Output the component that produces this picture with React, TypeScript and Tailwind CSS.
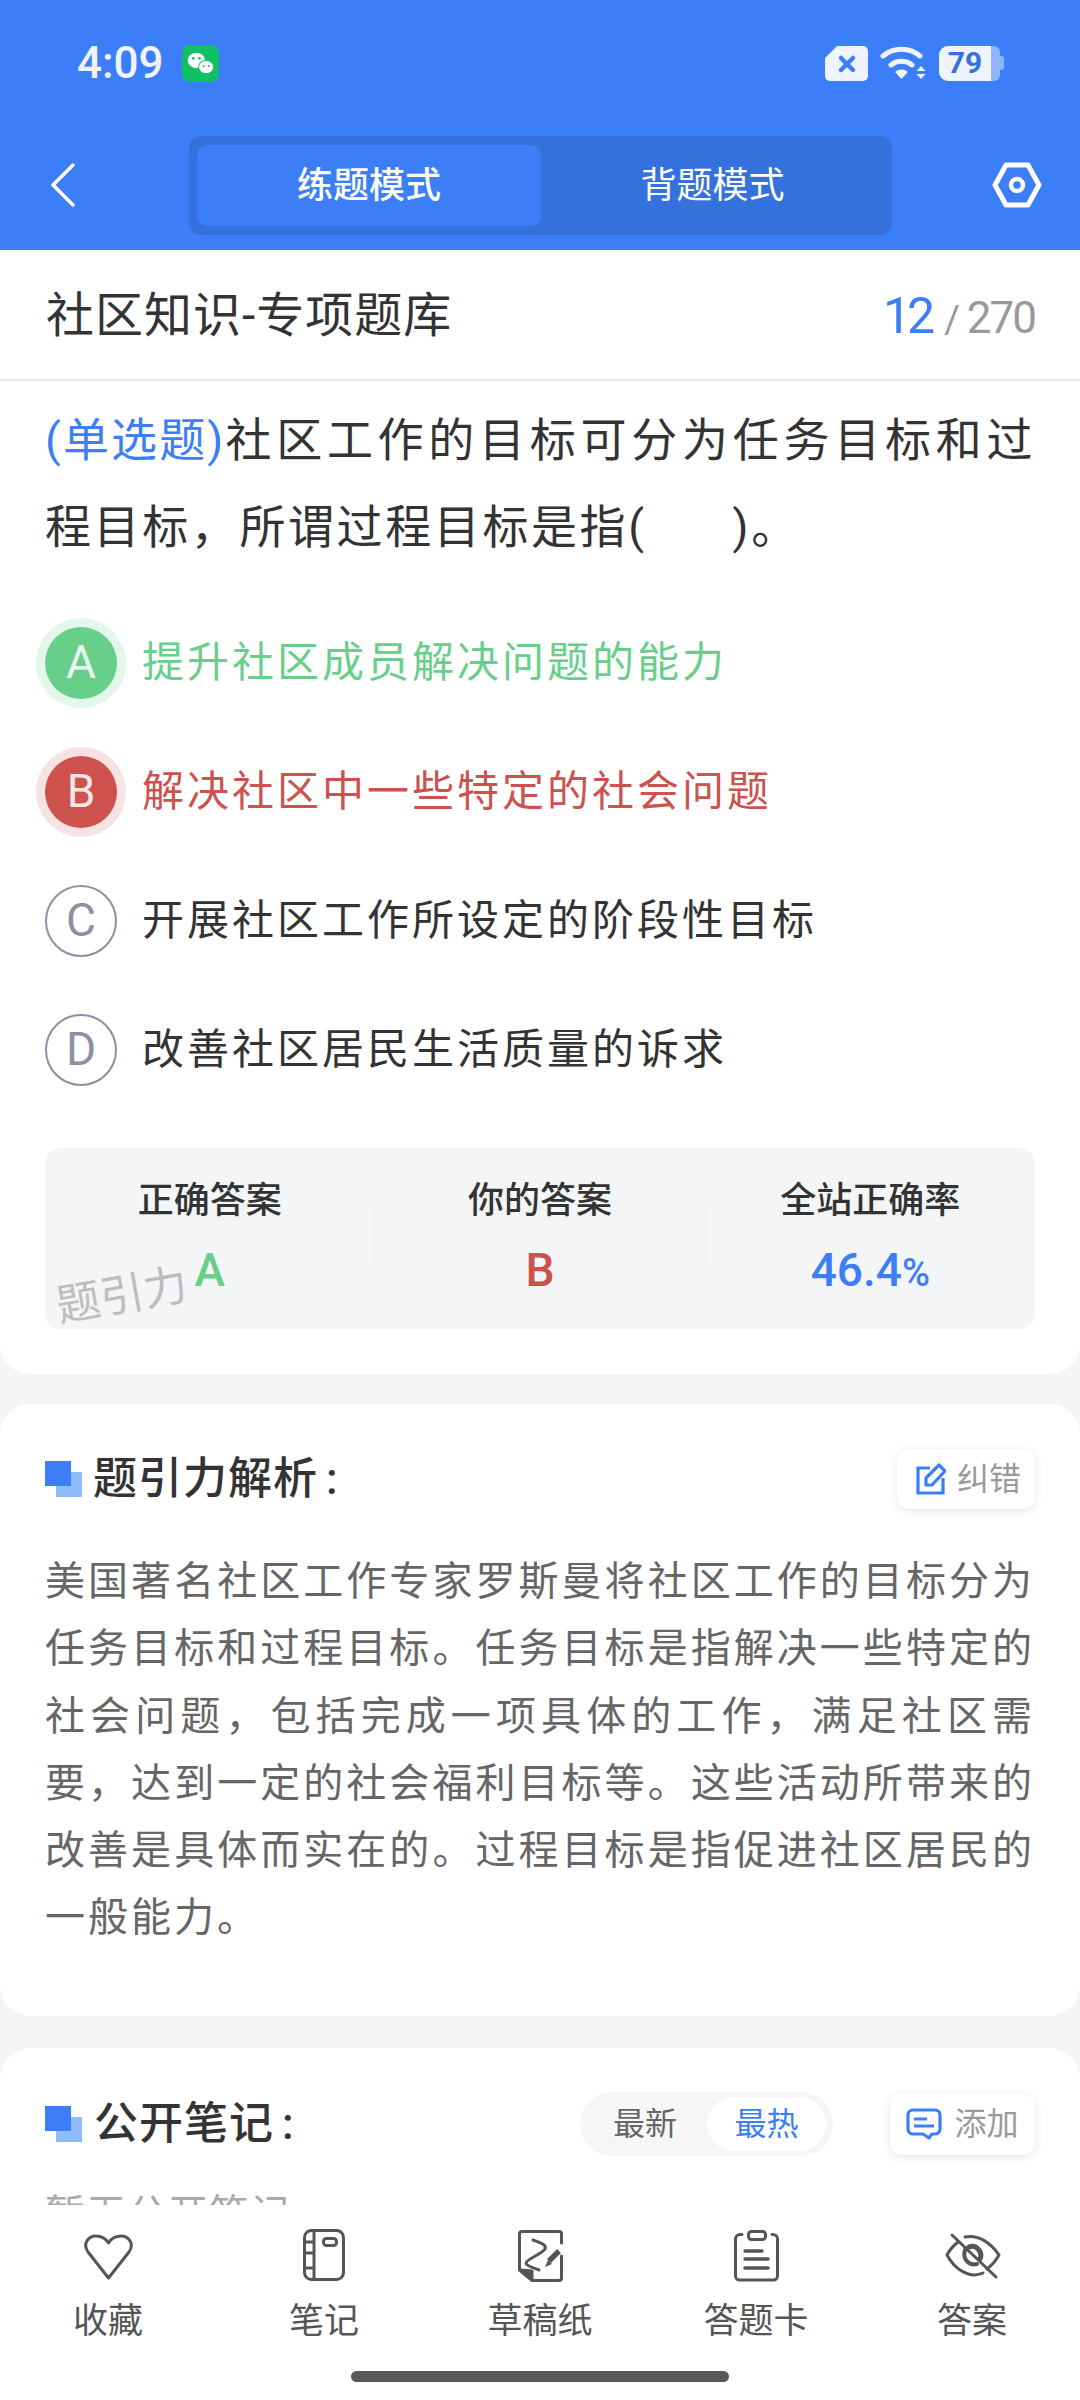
const FONT = "font-['Roboto','Noto_Sans_CJK_SC',sans-serif]";

const options = [
  { key: 'A', text: '提升社区成员解决问题的能力', state: 'right' },
  { key: 'B', text: '解决社区中一些特定的社会问题', state: 'wrong' },
  { key: 'C', text: '开展社区工作所设定的阶段性目标', state: 'idle' },
  { key: 'D', text: '改善社区居民生活质量的诉求', state: 'idle' },
];

function StatusBar() {
  return (
    <div className="flex h-[124px] items-center justify-between pl-[77px] pr-[76px] pt-[2px]">
      <div className="flex items-center gap-[18px]">
        <span className="text-[44px] font-medium leading-none text-[#eef3fe]">4:09</span>
        <svg width="37" height="37" viewBox="0 0 36 36">
          <rect width="36" height="36" rx="8" fill="#0fc161" />
          <ellipse cx="14" cy="15" rx="8.5" ry="7.5" fill="#fff" />
          <ellipse cx="23.5" cy="21.5" rx="7.5" ry="6.5" fill="#fff" stroke="#0fc161" />
          <circle cx="11" cy="13" r="1.3" fill="#0fc161" />
          <circle cx="17" cy="13" r="1.3" fill="#0fc161" />
          <circle cx="21" cy="20.5" r="1" fill="#0fc161" />
          <circle cx="26" cy="20.5" r="1" fill="#0fc161" />
        </svg>
      </div>
      <div className="flex items-center gap-[12px]">
        <svg width="43" height="35" viewBox="0 0 43 35">
          <path d="M12 0H38a5 5 0 0 1 5 5V30a5 5 0 0 1-5 5H5a5 5 0 0 1-5-5V12Z" fill="#eef3fe" />
          <path d="M16 12l12 12M28 12L16 24" stroke="#3b7ef8" strokeWidth="4.5" strokeLinecap="round" />
        </svg>
        <svg width="47" height="35" viewBox="0 0 47 35">
          <path d="M3 10a29 29 0 0 1 37 0M11 19a17 17 0 0 1 21 0" fill="none" stroke="#eef3fe" strokeWidth="5" strokeLinecap="round" />
          <path d="M15 26a10 10 0 0 1 13 0l-6.500 7Z" fill="#eef3fe" />
          <path d="M41 20l4.500 5h-9ZM36.500 28h9l-4.500 5Z" fill="#eef3fe" />
        </svg>
        <div className="flex items-center">
          <div className="flex h-[35px] w-[52px] items-center justify-center rounded-l-[9px] bg-[#eef3fe] text-[30px] font-bold leading-none text-[#3571dc]">
            79
          </div>
          <div className="h-[35px] w-[9px] rounded-r-[6px] bg-[#8fb4fa]" />
          <div className="h-[14px] w-[4px] rounded-r-[3px] bg-[#8fb4fa]" />
        </div>
      </div>
    </div>
  );
}

function NavBar() {
  return (
    <div className="flex h-[126px] items-start pl-[51px] pr-[38px] pt-[12px]">
      <svg className="mt-[27px]" width="24" height="44" viewBox="0 0 24 44">
        <path d="M22 2L2 22l20 20" fill="none" stroke="#fff" strokeWidth="3.500" strokeLinecap="round" strokeLinejoin="round" />
      </svg>
      <div className="ml-[114px] flex h-[99px] w-[703px] rounded-[12px] bg-[#3571dc] p-[8px] pt-[9px]">
        <div className="flex h-[81px] w-[344px] items-center justify-center rounded-[10px] bg-[#3b7ef8] text-[36px] font-medium text-white">
          练题模式
        </div>
        <div className="flex flex-1 items-center justify-center text-[36px] text-white">背题模式</div>
      </div>
      <svg className="ml-auto mt-[26px]" width="50" height="46" viewBox="0 0 50 46">
        <path d="M14 3H36L47 23 36 43H14L3 23Z" fill="none" stroke="#fff" strokeWidth="5" strokeLinejoin="round" />
        <circle cx="25" cy="23" r="6" fill="none" stroke="#fff" strokeWidth="4.500" />
      </svg>
    </div>
  );
}

function OptionRow({ item }: { item: (typeof options)[number] }) {
  return (
    <div className="flex h-[129px] items-center">
      {item.state === 'right' && (
        <div className="flex h-[72px] w-[72px] items-center justify-center rounded-full bg-[#68cf8b] text-[46px] text-[#e8f8ee] shadow-[0_0_0_9px_#e3f7ea]">
          A
        </div>
      )}
      {item.state === 'wrong' && (
        <div className="flex h-[72px] w-[72px] items-center justify-center rounded-full bg-[#cd514d] text-[46px] text-[#f8e6e6] shadow-[0_0_0_9px_#f6e3e3]">
          B
        </div>
      )}
      {item.state === 'idle' && (
        <div className="flex h-[72px] w-[72px] items-center justify-center rounded-full border-2 border-[#8d90a3] text-[46px] text-[#8d90a3]">
          {item.key}
        </div>
      )}
      <span
        className={`ml-[25px] text-[42px] leading-none tracking-[3px] ${
          item.state === 'right' ? 'text-[#68cf8b]' : item.state === 'wrong' ? 'text-[#cd514d]' : 'text-[#333]'
        }`}
      >
        {item.text}
      </span>
    </div>
  );
}

function SectionIcon() {
  return (
    <div className="relative h-[36px] w-[37px] shrink-0">
      <div className="absolute bottom-0 right-0 h-[25px] w-[26px] bg-[#90bbfb]" />
      <div className="absolute left-0 top-0 h-[25px] w-[26px] bg-[#3b7ef8]" />
    </div>
  );
}

function Stat({ label, children }: { label: string; children: React.ReactNode }) {
  return (
    <div className="flex w-[330px] flex-col items-center">
      <div className="text-[36px] font-medium leading-[50px] text-[#333]">{label}</div>
      <div className="mt-[19px] text-[46px] font-medium leading-[50px]">{children}</div>
    </div>
  );
}

function ExplainCard() {
  return (
    <div className="mt-[30px] h-[612px] rounded-[30px] bg-white px-[45px] pt-[45px]">
      <div className="flex items-center justify-between">
        <div className="flex items-center">
          <SectionIcon />
          <span className="ml-[11px] text-[44px] font-medium leading-none tracking-[1px] text-[#333]">
            题引力解析<span className="ml-[8px]">:</span>
          </span>
        </div>
        <div className="flex h-[60px] w-[138px] items-center justify-center gap-[11px] rounded-[12px] bg-white pl-[5px] shadow-[0_2px_10px_rgba(0,0,0,0.1)]">
          <svg width="30" height="32" viewBox="0 0 30 32">
            <path d="M14 5H2V30H27V15" fill="none" stroke="#3b7ef8" strokeWidth="3.200" />
            <path d="M10 22V15L23 2l6 6-13 14Z" fill="none" stroke="#3b7ef8" strokeWidth="3.200" strokeLinejoin="round" />
          </svg>
          <span className="text-[32px] text-[#999]">纠错</span>
        </div>
      </div>
      <p className="mt-[39px] text-justify text-[40px] leading-[67.3px] tracking-[3px] text-[#666]">
        美国著名社区工作专家罗斯曼将社区工作的目标分为任务目标和过程目标。任务目标是指解决一些特定的社会问题，包括完成一项具体的工作，满足社区需要，达到一定的社会福利目标等。这些活动所带来的改善是具体而实在的。过程目标是指促进社区居民的一般能力。
      </p>
    </div>
  );
}

function NotesCard() {
  return (
    <div className="mt-[32px] rounded-t-[30px] bg-white px-[45px] pt-[44px]">
      <div className="flex items-center">
        <SectionIcon />
        <span className="ml-[12px] text-[44px] font-medium leading-none tracking-[1px] text-[#333]">
          公开笔记<span className="ml-[8px]">:</span>
        </span>
        <div className="ml-auto flex h-[64px] w-[253px] items-center rounded-full bg-[#f6f6f6] pl-[33px] pr-[7px]">
          <span className="text-[32px] text-[#666]">最新</span>
          <div className="ml-auto flex h-[54px] w-[119px] items-center justify-center rounded-full bg-white text-[32px] text-[#3b7ef8]">
            最热
          </div>
        </div>
        <div className="ml-[57px] flex h-[61px] w-[145px] items-center justify-center gap-[12px] rounded-[12px] bg-white shadow-[0_2px_10px_rgba(0,0,0,0.1)]">
          <svg width="36" height="32" viewBox="0 0 36 32">
            <path d="M7 2H29a5 5 0 0 1 5 5V21a5 5 0 0 1-5 5H26l-3 4-6-4H7a5 5 0 0 1-5-5V7a5 5 0 0 1 5-5Z" fill="none" stroke="#3b7ef8" strokeWidth="3.200" strokeLinejoin="round" />
            <path d="M8 11H21M8 18H28" stroke="#3b7ef8" strokeWidth="3.200" />
          </svg>
          <span className="text-[32px] text-[#999]">添加</span>
        </div>
      </div>
      <div className="mt-[29px] text-[40px] leading-[60px] tracking-[1px] text-[#aaa]">暂无公开笔记</div>
    </div>
  );
}

const tabs = [
  {
    label: '收藏',
    icon: <path d="M27.500 49L7 23C1 14 8 7 15 7c6 0 10 3 12.500 7C30 10 34 7 40 7c7 0 14 7 8 16Z" />,
  },
  {
    label: '笔记',
    icon: (
      <>
        <rect x="7.500" y="1.500" width="39" height="49" rx="7" />
        <path d="M17 2V50M7.500 13H17M7.500 24H17M7.500 39H17" />
        <rect x="26.500" y="9.500" width="13" height="7" rx="3" />
      </>
    ),
  },
  {
    label: '草稿纸',
    icon: (
      <>
        <path d="M19 51.500H46a2.500 2.500 0 0 0 2.500-2.500V27M48.500 14V5A2.500 2.500 0 0 0 46 2.500H9A2.500 2.500 0 0 0 6.500 5V41L19 51.500" />
        <path d="M8 41L19 42V51Z" fill="#555" />
        <path d="M20 11C28 14 34 16 32 20 29 25 14 30 13 34c0 3 8 5 13 7" />
        <path d="M36 32L46 22" strokeWidth="5.500" strokeLinecap="butt" />
        <path d="M35 31L39 35 32 38Z" fill="#555" stroke="none" />
      </>
    ),
  },
  {
    label: '答题卡',
    icon: (
      <>
        <path d="M13 5.500H11A4.500 4.500 0 0 0 6.500 10V47A4 4 0 0 0 10.500 51H44.500A4 4 0 0 0 48.500 47V10A4.500 4.500 0 0 0 44 5.500H43" />
        <rect x="19.500" y="2.500" width="17" height="8" rx="3" />
        <path d="M16 22H33M16 30H39M16 39H39" strokeWidth="3.500" />
      </>
    ),
  },
  {
    label: '答案',
    icon: (
      <>
        <path d="M20 8C33 5 46 14 54 26 50 33 46 37 42 40" />
        <path d="M13 13C8 17 4 22 2 26 10 41 25 50 38 44" />
        <path d="M20 21C17 30 24 37 32 35" strokeWidth="4" />
        <path d="M24 18C32 15 38 24 35 30" strokeWidth="5" />
        <path d="M7 6L51 48" />
      </>
    ),
  },
];

function BottomBar() {
  return (
    <div className="relative h-[195px] shrink-0 bg-white">
      <div className="grid grid-cols-5">
        {tabs.map((t) => (
          <div key={t.label} className="flex flex-col items-center pt-[24px]">
            <svg
              className="overflow-visible"
              width="54"
              height="54"
              viewBox="0 0 54 54"
              fill="none"
              stroke="#555"
              strokeWidth="3"
              strokeLinecap="round"
              strokeLinejoin="round"
            >
              {t.icon}
            </svg>
            <span className="mt-[14px] text-[35px] leading-[50px] text-[#555]">{t.label}</span>
          </div>
        ))}
      </div>
      <div className="absolute bottom-[18px] left-[351px] h-[11px] w-[378px] rounded-full bg-[#5a5a5a]" />
    </div>
  );
}

export default function App() {
  return (
    <div className={`flex h-[2400px] w-[1080px] flex-col overflow-hidden bg-[#f4f5f7] ${FONT}`}>
      <div className="shrink-0 bg-[#3b7ef8]">
        <StatusBar />
        <NavBar />
      </div>

      <div className="min-h-0 flex-1 overflow-hidden">
        <div className="rounded-b-[30px] bg-white pb-[45px]">
          <div className="flex h-[131px] items-center justify-between border-b-2 border-[#e6e6e6] pl-[46px] pr-[45px] pt-[3px]">
            <span className="text-[48px] leading-none tracking-[1px] text-[#333]">社区知识-专项题库</span>
            <span className="flex items-baseline text-[44px] leading-none tracking-[-2px] text-[#999]">
              <span className="text-[50px] tracking-[-4px] text-[#3b7ef8]">12</span>
              <span className="ml-[13px] mr-[9px] text-[38px]">/</span>
              270
            </span>
          </div>

          <div className="px-[45px]">
            <p className="mt-[16px] text-justify text-[46px] leading-[87px] tracking-[2.6px] text-[#333]">
              <span className="tracking-[0px] text-[#3b7ef8]">(单选题)</span>
              社区工作的目标可分为任务目标和过程目标，所谓过程目标是指(
              <span className="inline-block w-[86px]" />
              )。
            </p>

            <div className="mt-[27px]">
              {options.map((o) => (
                <OptionRow key={o.key} item={o} />
              ))}
            </div>

            <div className="relative mt-[34px] flex h-[181px] items-start rounded-[16px] bg-[#f4f5f7] pt-[28px]">
              <Stat label="正确答案">
                <span className="text-[#68cf8b]">A</span>
              </Stat>
              <div className="mt-[32px] h-[59px] w-px shrink-0 bg-[#e9eaee]" />
              <Stat label="你的答案">
                <span className="text-[#cd514d]">B</span>
              </Stat>
              <div className="mt-[32px] h-[59px] w-px shrink-0 bg-[#e9eaee]" />
              <Stat label="全站正确率">
                <span className="text-[#3b7ef8]">
                  46.4<span className="text-[38px]">%</span>
                </span>
              </Stat>
              <span className="absolute left-[12px] top-[137px] origin-left -rotate-[10deg] text-[44px] leading-none text-[#bdbdbd]">
                题引力
              </span>
            </div>
          </div>
        </div>

        <ExplainCard />
        <NotesCard />
      </div>

      <BottomBar />
    </div>
  );
}
